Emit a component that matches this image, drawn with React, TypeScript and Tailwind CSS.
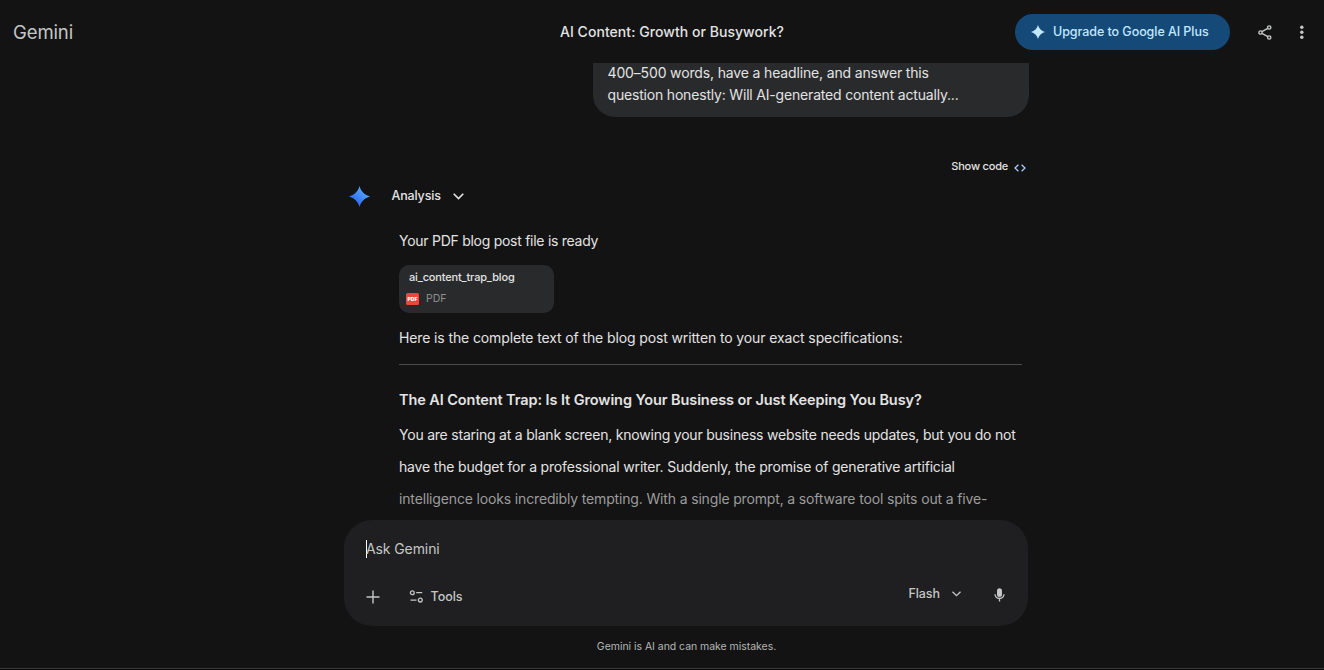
import type { ReactNode } from "react";

function Spark({ className, fill }: { className: string; fill: string }) {
  return (
    <svg className={className} viewBox="0 0 24 24">
      <defs>
        <linearGradient id="spark" x1="4" y1="20" x2="18" y2="4" gradientUnits="userSpaceOnUse">
          <stop offset="0" stopColor="#2a62ee" />
          <stop offset="0.5" stopColor="#3c86f8" />
          <stop offset="1" stopColor="#5aa8fb" />
        </linearGradient>
      </defs>
      <path fill={fill} d="M12 0C13.6 6 18 10.4 24 12C18 13.6 13.6 18 12 24C10.4 18 6 13.6 0 12C6 10.4 10.4 6 12 0Z" />
    </svg>
  );
}

function Header() {
  return (
    <header className="flex h-[63px] shrink-0 items-center">
      <div className="w-[560px] pl-[13px] text-[18.5px] leading-6 tracking-[-0.1px] text-[#c4c7c5]">Gemini</div>
      <h1 className="w-[455px] whitespace-nowrap text-[14px] font-medium leading-5 tracking-[0.05px] text-[#e3e3e3]">
        AI Content: Growth or Busywork?
      </h1>
      <button className="flex h-9 w-[215px] items-center rounded-full bg-[#154a78] pl-4 text-[12.5px] font-medium tracking-[-0.06px] text-[#c2e7ff]">
        <Spark className="mr-2 size-[14px]" fill="#c2e7ff" />
        <span className="whitespace-nowrap pt-[2px]">Upgrade to Google AI Plus</span>
      </button>
      <svg className="ml-[28px] mt-[2px] size-[15px]" viewBox="0 0 15 15" fill="none" stroke="#c4c7c5" strokeWidth="1.4">
        <circle cx="11.2" cy="2.5" r="1.6" />
        <circle cx="2.5" cy="7.5" r="1.6" />
        <circle cx="11.2" cy="12.5" r="1.6" />
        <path d="M3.9 6.7 9.8 3.3M3.9 8.3 9.8 11.7" />
      </svg>
      <svg className="ml-[26px] mt-[2px] h-[15px] w-[5px]" viewBox="0 0 5 15" fill="#c4c7c5">
        <circle cx="2.8" cy="2.2" r="1.75" />
        <circle cx="2.8" cy="7.2" r="1.75" />
        <circle cx="2.8" cy="12.2" r="1.75" />
      </svg>
    </header>
  );
}

function Line({ children, className }: { children: ReactNode; className: string }) {
  return <span className={`block whitespace-nowrap ${className}`}>{children}</span>;
}

function Conversation() {
  return (
    <main className="h-[457px] shrink-0 overflow-hidden">
      <div className="ml-[344px] flex w-[685px] flex-col text-[14px] text-[#e3e3e3]">
        <div className="h-[54px] w-[436px] self-end overflow-hidden rounded-b-[22px] bg-[#282a2c] pl-[14.5px] leading-[22px]">
          <Line className="-mt-px tracking-[-0.15px]">400–500 words, have a headline, and answer this</Line>
          <Line className="tracking-[-0.185px]">question honestly: Will AI-generated content actually...</Line>
        </div>
        <div className="mt-[39px] flex h-5 items-center justify-end pr-[3px] text-[11px] font-medium tracking-[-0.2px]">
          Show code
          <svg className="ml-[6px] mt-[3px] h-[8px] w-[12px]" viewBox="0 0 12 8" fill="none" stroke="#a8c7fa" strokeWidth="1.3">
            <path d="M4.4.7 1 4l3.400 3.300M7.600.7 11 4 7.600 7.300" />
          </svg>
        </div>
        <div className="mt-[10px] flex h-5 items-center">
          <Spark className="ml-[5px] mt-[1px] size-[21px]" fill="url(#spark)" />
          <span className="ml-[21.5px] w-[61.5px] text-[12.5px] font-medium tracking-[-0.15px]">Analysis</span>
          <svg className="h-[7px] w-[11px]" viewBox="0 0 11 7" fill="none" stroke="#e3e3e3" strokeWidth="1.6">
            <path d="M.7.8 5.5 5.6 10.3.8" />
          </svg>
        </div>
        <div className="ml-[55px] flex w-[623px] flex-col">
          <p className="mt-[24px] h-[22px] whitespace-nowrap leading-[22px] tracking-[-0.27px]">Your PDF blog post file is ready</p>
          <div className="mt-[13px] h-12 w-[155px] rounded-[10px] bg-[#282a2c]">
            <div className="pl-[10px] pt-[4px] text-[11px] font-medium leading-4 tracking-[-0.16px]">ai_content_trap_blog</div>
            <div className="mt-[6px] flex items-center pl-[7px] text-[10.5px] leading-4 text-[#8e918f]">
              <span className="mr-[7px] flex h-[12px] w-[13px] items-center justify-center rounded-[1.5px] bg-[#e5493a] text-[5px] font-black leading-none text-white">
                PDF
              </span>
              PDF
            </div>
          </div>
          <p className="mt-[14px] h-[22px] whitespace-nowrap leading-[22px] tracking-[-0.12px]">
            Here is the complete text of the blog post written to your exact specifications:
          </p>
          <hr className="mt-[15px] border-[#4a4c4c]" />
          <h2 className="mt-[24px] whitespace-nowrap text-[14.5px] font-semibold leading-[22px] tracking-[-0.09px]">
            The AI Content Trap: Is It Growing Your Business or Just Keeping You Busy?
          </h2>
          <p className="mt-[8px] leading-8">
            <Line className="tracking-[-0.22px]">You are staring at a blank screen, knowing your business website needs updates, but you do not</Line>
            <Line className="tracking-[-0.175px]">have the budget for a professional writer. Suddenly, the promise of generative artificial</Line>
            <Line className="tracking-[-0.155px] text-[#9c9c9c]">intelligence looks incredibly tempting. With a single prompt, a software tool spits out a five-</Line>
          </p>
        </div>
      </div>
    </main>
  );
}

function Composer() {
  return (
    <section className="ml-[344px] h-[106px] w-[684px] shrink-0 rounded-[28px] bg-[#1f1f21] text-[#c4c7c5]">
      <div className="flex h-[58px] items-center pl-[22px] text-[14px] tracking-[-0.1px]">
        <span className="h-[18px] w-px bg-white" />
        <span className="-ml-px pb-[2px]">Ask Gemini</span>
      </div>
      <div className="flex h-[38px] items-center text-[12.5px] font-medium tracking-[-0.05px]">
        <svg className="ml-[22px] size-[14px]" viewBox="0 0 14 14" stroke="#c4c7c5" strokeWidth="1.4">
          <path d="M7 .5v13M.5 7h13" />
        </svg>
        <svg className="mb-px ml-[29px] h-[13px] w-[15px]" viewBox="0 0 15 13" fill="none" stroke="#c4c7c5" strokeWidth="1.3">
          <circle cx="3.3" cy="2.7" r="1.9" />
          <path d="M7.2 2.7h6M1.5 10.1h6" />
          <circle cx="11.3" cy="10.1" r="1.9" />
        </svg>
        <span className="ml-[6.5px]">Tools</span>
        <span className="mb-[6px] ml-auto">Flash</span>
        <svg className="mb-[6px] ml-[12px] h-[6px] w-[9px]" viewBox="0 0 9 6" fill="none" stroke="#c4c7c5" strokeWidth="1.3">
          <path d="M.5.7 4.5 4.7 8.5.7" />
        </svg>
        <svg className="mb-[4px] ml-[33px] mr-[23px] h-[14px] w-[11px]" viewBox="0 0 11 14">
          <rect x="3" y="0.3" width="5" height="8.6" rx="2.5" fill="#c4c7c5" />
          <path d="M1 6.3c.2 2.6 2 4.2 4.5 4.2S9.8 8.9 10 6.3M5.5 10.5v3" fill="none" stroke="#c4c7c5" strokeWidth="1.3" />
        </svg>
      </div>
    </section>
  );
}

export default function App() {
  return (
    <div className="flex h-[670px] w-[1324px] flex-col overflow-hidden bg-[#131313] font-['Inter',sans-serif]">
      <Header />
      <Conversation />
      <Composer />
      <footer className="flex h-[43px] shrink-0 justify-center border-b border-[#3a3a3a] pl-[49px] pt-[13px] text-[10.5px] leading-4 tracking-[-0.04px] text-[#b4b7b5]">
        Gemini is AI and can make mistakes.
      </footer>
      <div className="h-px shrink-0 bg-[#080808]" />
    </div>
  );
}
